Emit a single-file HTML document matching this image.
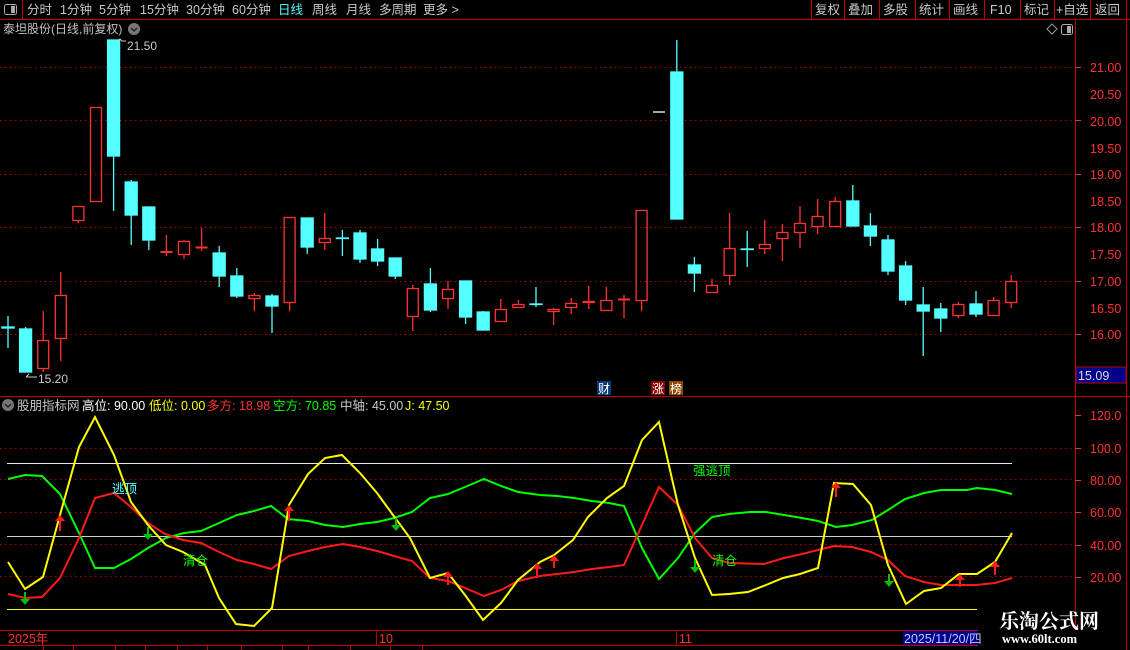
<!DOCTYPE html>
<html><head><meta charset="utf-8"><style>
body{margin:0;background:#000;width:1130px;height:650px;overflow:hidden;font-family:"Liberation Sans","Noto Sans CJK SC",sans-serif}
svg{position:absolute;left:0;top:0}
</style></head><body>
<svg width="1130" height="650" viewBox="0 0 1130 650" font-family="Liberation Sans, Noto Sans CJK SC, sans-serif">
<g fill="#c8c8c8" font-size="12.5">
<text x="27" y="14">分时</text><text x="60" y="14">1分钟</text><text x="99" y="14">5分钟</text><text x="140" y="14">15分钟</text><text x="186" y="14">30分钟</text><text x="232" y="14">60分钟</text><text x="278" y="14" fill="#54ffff">日线</text><text x="312" y="14">周线</text><text x="346" y="14">月线</text><text x="379" y="14">多周期</text><text x="423" y="14">更多 &gt;</text>
<text x="815" y="14">复权</text><text x="848" y="14">叠加</text><text x="883" y="14">多股</text><text x="919" y="14">统计</text><text x="953" y="14">画线</text><text x="990" y="14">F10</text><text x="1024" y="14">标记</text><text x="1056" y="14">+自选</text><text x="1095" y="14">返回</text>
</g>
<g stroke="#c00000" stroke-width="1" fill="none">
<line x1="0" y1="19.5" x2="1130" y2="19.5"/>
<line x1="22.5" y1="0" x2="22.5" y2="19"/>
<line x1="811.5" y1="0" x2="811.5" y2="19"/><line x1="844.5" y1="0" x2="844.5" y2="19"/><line x1="879.5" y1="0" x2="879.5" y2="19"/><line x1="915.5" y1="0" x2="915.5" y2="19"/><line x1="949.5" y1="0" x2="949.5" y2="19"/><line x1="984.5" y1="0" x2="984.5" y2="19"/><line x1="1020.5" y1="0" x2="1020.5" y2="19"/><line x1="1054.5" y1="0" x2="1054.5" y2="19"/><line x1="1090.5" y1="0" x2="1090.5" y2="19"/><line x1="1126.5" y1="0" x2="1126.5" y2="650"/>
<line x1="1075.5" y1="19" x2="1075.5" y2="630"/>
<line x1="0" y1="396.5" x2="1130" y2="396.5"/>
<line x1="0" y1="630.5" x2="978" y2="630.5"/>
<line x1="0" y1="645.5" x2="978" y2="645.5"/>
<line x1="376.5" y1="630" x2="376.5" y2="645"/><line x1="676.5" y1="630" x2="676.5" y2="645"/>
<line x1="43.5" y1="646" x2="43.5" y2="650"/><line x1="73.5" y1="646" x2="73.5" y2="650"/><line x1="115.5" y1="646" x2="115.5" y2="650"/><line x1="145.5" y1="646" x2="145.5" y2="650"/><line x1="177.5" y1="646" x2="177.5" y2="650"/><line x1="207.5" y1="646" x2="207.5" y2="650"/><line x1="241.5" y1="646" x2="241.5" y2="650"/><line x1="282.5" y1="646" x2="282.5" y2="650"/><line x1="308.5" y1="646" x2="308.5" y2="650"/><line x1="350.5" y1="646" x2="350.5" y2="650"/><line x1="390.5" y1="646" x2="390.5" y2="650"/><line x1="422.5" y1="646" x2="422.5" y2="650"/>
</g>
<rect x="4.5" y="4.5" width="12" height="10" rx="2" fill="none" stroke="#aaa"/><rect x="11" y="6" width="4" height="7" fill="#aaa"/>
<text x="3" y="33" fill="#c0c0c0" font-size="12">泰坦股份(日线,前复权)</text>
<circle cx="134" cy="29" r="6" fill="#777"/><path d="M131 28l3 3 3-3" stroke="#222" fill="none" stroke-width="1.5"/>
<path d="M1047 29l5-5 5 5-5 5z" fill="none" stroke="#999"/>
<rect x="1061.5" y="24.5" width="11" height="10" rx="2" fill="none" stroke="#aaa"/><rect x="1067" y="26" width="4" height="7" fill="#aaa"/>
<g stroke="#b00000" stroke-dasharray="1.5 3.5">
<line x1="0" y1="67.5" x2="1075" y2="67.5"/><line x1="0" y1="120.5" x2="1075" y2="120.5"/><line x1="0" y1="174.5" x2="1075" y2="174.5"/><line x1="0" y1="227.5" x2="1075" y2="227.5"/><line x1="0" y1="281.5" x2="1075" y2="281.5"/><line x1="0" y1="334.5" x2="1075" y2="334.5"/>
<line x1="0" y1="448.5" x2="1075" y2="448.5"/><line x1="0" y1="479.5" x2="1075" y2="479.5"/><line x1="0" y1="512.5" x2="1075" y2="512.5"/><line x1="0" y1="544.5" x2="1075" y2="544.5"/><line x1="0" y1="576.5" x2="1075" y2="576.5"/>
</g>
<g fill="#ff3232" font-size="12.5">
<text x="1090" y="72">21.00</text><text x="1090" y="99">20.50</text><text x="1090" y="126">20.00</text><text x="1090" y="153">19.50</text><text x="1090" y="179">19.00</text><text x="1090" y="206">18.50</text><text x="1090" y="232">18.00</text><text x="1090" y="259">17.50</text><text x="1090" y="286">17.00</text><text x="1090" y="313">16.50</text><text x="1090" y="339">16.00</text>
<text x="1090" y="420">120.0</text><text x="1090" y="453">100.0</text><text x="1090" y="485">80.00</text><text x="1090" y="517">60.00</text><text x="1090" y="550">40.00</text><text x="1090" y="582">20.00</text>
</g>
<g stroke="#ff3232"><line x1="1075" y1="67.5" x2="1081" y2="67.5"/><line x1="1075" y1="120.5" x2="1081" y2="120.5"/><line x1="1075" y1="174.5" x2="1081" y2="174.5"/><line x1="1075" y1="227.5" x2="1081" y2="227.5"/><line x1="1075" y1="281.5" x2="1081" y2="281.5"/><line x1="1075" y1="334.5" x2="1081" y2="334.5"/>
<line x1="1075" y1="415.5" x2="1081" y2="415.5"/><line x1="1075" y1="448.5" x2="1081" y2="448.5"/><line x1="1075" y1="480.5" x2="1081" y2="480.5"/><line x1="1075" y1="512.5" x2="1081" y2="512.5"/><line x1="1075" y1="545.5" x2="1081" y2="545.5"/><line x1="1075" y1="577.5" x2="1081" y2="577.5"/></g>
<rect x="1076" y="367" width="50" height="16" fill="#00008b" stroke="#c00000"/>
<text x="1078" y="380" fill="#ddd" font-size="12.5">15.09</text>
<g stroke-width="1.3">
<g stroke="#54ffff" fill="#54ffff">
<line x1="8" y1="316" x2="8" y2="348"/><rect x="2" y="327" width="12" height="1"/>
<line x1="25.6" y1="327" x2="25.6" y2="372"/><rect x="19.6" y="329" width="12" height="43"/>
<line x1="113.6" y1="40" x2="113.6" y2="211"/><rect x="107.6" y="40" width="12" height="116"/>
<line x1="131.2" y1="180" x2="131.2" y2="245"/><rect x="125.2" y="182" width="12" height="33"/>
<line x1="148.8" y1="207" x2="148.8" y2="250"/><rect x="142.8" y="207" width="12" height="33"/>
<line x1="219.2" y1="246" x2="219.2" y2="287"/><rect x="213.2" y="253" width="12" height="23"/>
<line x1="236.8" y1="268" x2="236.8" y2="298"/><rect x="230.8" y="276" width="12" height="20"/>
<line x1="272" y1="294" x2="272" y2="333"/><rect x="266" y="296" width="12" height="10"/>
<line x1="307.2" y1="218" x2="307.2" y2="254"/><rect x="301.2" y="218" width="12" height="29"/>
<line x1="342.4" y1="230" x2="342.4" y2="256"/><rect x="336.4" y="238" width="12" height="0.5"/>
<line x1="360" y1="230" x2="360" y2="263"/><rect x="354" y="233" width="12" height="26"/>
<line x1="377.6" y1="239" x2="377.6" y2="266"/><rect x="371.6" y="249" width="12" height="12"/>
<line x1="395.2" y1="258" x2="395.2" y2="279"/><rect x="389.2" y="258" width="12" height="18"/>
<line x1="430.4" y1="268" x2="430.4" y2="312"/><rect x="424.4" y="284" width="12" height="26"/>
<line x1="465.6" y1="281" x2="465.6" y2="324"/><rect x="459.6" y="281" width="12" height="36"/>
<line x1="483.2" y1="311" x2="483.2" y2="330"/><rect x="477.2" y="312" width="12" height="18"/>
<line x1="536" y1="287" x2="536" y2="307"/><rect x="530" y="304" width="12" height="0.5"/>
<line x1="676.8" y1="40" x2="676.8" y2="219"/><rect x="670.8" y="72" width="12" height="147"/>
<line x1="694.4" y1="257" x2="694.4" y2="292"/><rect x="688.4" y="265" width="12" height="8"/>
<line x1="747.2" y1="231" x2="747.2" y2="267"/><rect x="741.2" y="249" width="12" height="0.5"/>
<line x1="852.8" y1="185" x2="852.8" y2="226"/><rect x="846.8" y="201" width="12" height="25"/>
<line x1="870.4" y1="213" x2="870.4" y2="246"/><rect x="864.4" y="226" width="12" height="10"/>
<line x1="888" y1="235" x2="888" y2="275"/><rect x="882" y="240" width="12" height="31"/>
<line x1="905.6" y1="261" x2="905.6" y2="305"/><rect x="899.6" y="266" width="12" height="34"/>
<line x1="923.2" y1="287" x2="923.2" y2="356"/><rect x="917.2" y="305" width="12" height="6"/>
<line x1="940.8" y1="303" x2="940.8" y2="332"/><rect x="934.8" y="309" width="12" height="9"/>
<line x1="976" y1="291" x2="976" y2="317"/><rect x="970" y="304" width="12" height="10"/>
</g>
<g stroke="#ff3232" fill="none">
<path d="M43.2 311V340M43.2 369V372M60.8 272V295M60.8 339V361M78.4 221V223M166.4 235V256M184 240V241M184 255V259M201.6 228V251M254.4 293V295M254.4 299V311M289.6 303V311M324.8 213V238M324.8 243V250M412.8 285V288M412.8 317V331M448 281V289M448 299V309M500.8 299V309M518.4 300V304M553.6 308V309M553.6 312V325M571.2 298V303M571.2 308V314M588.8 286V301M588.8 303V309M606.4 287V300M624 295V318M641.6 301V311M712 279V285M729.6 213V248M729.6 276V285M764.8 220V244M764.8 249V254M782.4 224V232M782.4 239V261M800 206V223M800 233V248M817.6 199V216M817.6 227V234M835.2 197V201M958.4 302V304M958.4 316V318M993.6 297V300M1011.2 275V281M1011.2 303V308"/>
<rect x="37.7" y="340.5" width="11" height="28"/><rect x="55.3" y="295.5" width="11" height="43"/><rect x="72.9" y="206.5" width="11" height="14"/><rect x="90.5" y="107.5" width="11" height="94"/>
<rect x="178.5" y="241.5" width="11" height="13"/><rect x="248.9" y="295.5" width="11" height="3"/><rect x="284.1" y="217.5" width="11" height="85"/><rect x="319.3" y="238.5" width="11" height="4"/><rect x="407.3" y="288.5" width="11" height="28"/><rect x="442.5" y="289.5" width="11" height="9"/><rect x="495.3" y="309.5" width="11" height="12"/><rect x="512.9" y="304.5" width="11" height="3"/><rect x="548.1" y="309.5" width="11" height="2"/><rect x="565.7" y="303.5" width="11" height="4"/><rect x="583.3" y="301.5" width="11" height="1"/><rect x="600.9" y="300.5" width="11" height="10"/><rect x="636.1" y="210.5" width="11" height="90"/>
<rect x="706.5" y="285.5" width="11" height="7"/><rect x="724.1" y="248.5" width="11" height="27"/><rect x="759.3" y="244.5" width="11" height="4"/><rect x="776.9" y="232.5" width="11" height="6"/><rect x="794.5" y="223.5" width="11" height="9"/><rect x="812.1" y="216.5" width="11" height="10"/><rect x="829.7" y="201.5" width="11" height="25"/><rect x="952.9" y="304.5" width="11" height="11"/><rect x="988.1" y="300.5" width="11" height="15"/><rect x="1005.7" y="281.5" width="11" height="21"/>
</g>
<g fill="#ff3232"><rect x="160.4" y="251" width="12" height="2"/><rect x="195.6" y="246.5" width="12" height="2"/><rect x="618" y="298.5" width="12" height="2"/></g>
<line x1="653" y1="112" x2="665" y2="112" stroke="#fff"/>
</g>
<text x="127" y="50" fill="#c8c8c8" font-size="12">21.50</text><path d="M117 41l3-2 2 2h4" stroke="#c8c8c8" fill="none"/>
<text x="38" y="383" fill="#c8c8c8" font-size="12">15.20</text><path d="M26 377h11M26 377l3-3" stroke="#c8c8c8" fill="none"/>
<rect x="597" y="381" width="14" height="14" fill="#0a3a7a"/><text x="598" y="393" fill="#fff" font-size="12">财</text>
<rect x="651" y="381" width="14" height="14" fill="#8b0000"/><text x="652" y="393" fill="#fff" font-size="12">涨</text>
<rect x="669" y="381" width="14" height="14" fill="#8b4a00"/><text x="670" y="393" fill="#fff" font-size="12">榜</text>
<circle cx="8" cy="405" r="6" fill="#777"/><path d="M5 404l3 3 3-3" stroke="#222" fill="none" stroke-width="1.5"/>
<g font-size="12.5"><text x="17" y="410" fill="#c8c8c8">股朋指标网</text><text x="82" y="410" fill="#fff">高位: 90.00</text><text x="149" y="410" fill="#ffff00">低位: 0.00</text><text x="207" y="410" fill="#ff3232">多方: 18.98</text><text x="273" y="410" fill="#00ff00">空方: 70.85</text><text x="340" y="410" fill="#c8c8c8">中轴: 45.00</text><text x="405" y="410" fill="#ffff00">J: 47.50</text></g>
<line x1="7" y1="463.5" x2="1012" y2="463.5" stroke="#e8e8e8"/>
<line x1="7" y1="536.5" x2="1012" y2="536.5" stroke="#d0d0d0"/>
<line x1="7" y1="609.5" x2="977" y2="609.5" stroke="#ffff00"/>
<g fill="none" stroke-width="2">
<polyline stroke="#00ff00" points="8,479 25,475 42,476 60,494 79,533 95,568 114,568 131,559 148,548 166,538 184,533 201,531 219,523 237,515 254,511 271,506 288,519 308,521 325,525 343,527 360,524 377,522 394,518 412,512 430,498 448,494 465,487 484,479 501,486 518,492 540,495 557,496 574,498 592,501 609,503 624,506 642,548 659,579 678,558 695,533 712,517 729,514 750,512 766,512 784,515 802,518 818,521 836,527 852,525 872,520 888,510 905,499 924,493 941,490 967,490 977,488 995,490 1012,494"/>
<polyline stroke="#ff1a1a" points="8,594 25,598 42,597 60,578 79,538 95,498 114,493 131,507 148,523 165,534 183,540 201,543 219,552 237,560 254,564 271,569 289,556 308,551 325,547 343,544 360,547 377,551 394,556 412,561 430,578 448,581 465,588 484,596 501,590 518,581 540,576 557,574 574,572 592,569 609,567 624,565 659,487 678,505 695,538 712,558 729,563 764,564 784,558 802,554 818,550 834,546 852,547 871,552 888,560 905,576 924,582 941,585 976,585 995,583 1012,578"/>
<polyline stroke="#ffff00" points="8,562 25,589 43,577 60,515 79,447 95,417 114,455 131,502 148,525 166,545 183,552 205,565 219,598 236,624 254,626 272,608 289,505 308,474 325,458 342,455 360,473 377,493 393,515 410,538 430,578 448,573 465,595 483,620 501,603 518,580 540,562 554,555 573,540 588,517 607,498 624,486 642,440 659,422 678,505 695,558 712,595 729,594 748,592 766,585 783,578 800,574 818,568 834,483 853,484 871,505 888,565 906,604 924,591 941,588 959,574 977,574 995,562 1012,533"/>
</g>
<g fill="#ff1a1a" stroke="#ff1a1a" stroke-width="2">
<path d="M60 531V520" /><path d="M55 521l5-6 5 6z" stroke="none"/>
<path d="M289 521V510"/><path d="M284 511l5-6 5 6z" stroke="none"/>
<path d="M448 585V576"/><path d="M443 577l5-6 5 6z" stroke="none"/>
<path d="M537 578V568"/><path d="M532 569l5-6 5 6z" stroke="none"/>
<path d="M554 568V560"/><path d="M549 561l5-6 5 6z" stroke="none"/>
<path d="M836 497V487"/><path d="M831 488l5-6 5 6z" stroke="none"/>
<path d="M960 587V579"/><path d="M955 580l5-6 5 6z" stroke="none"/>
<path d="M995 575V566"/><path d="M990 567l5-6 5 6z" stroke="none"/>
</g>
<g fill="#00c000" stroke="#00c000" stroke-width="2">
<path d="M25 592V601"/><path d="M20 599l5 6 5-6z" stroke="none"/>
<path d="M148 527V536"/><path d="M143 534l5 6 5-6z" stroke="none"/>
<path d="M396 518V527"/><path d="M391 525l5 6 5-6z" stroke="none"/>
<path d="M695 560V569"/><path d="M690 567l5 6 5-6z" stroke="none"/>
<path d="M889 574V583"/><path d="M884 581l5 6 5-6z" stroke="none"/>
</g>
<g font-size="12.5"><text x="112" y="493" fill="#54ffff">逃顶</text><text x="183" y="565" fill="#00ff00">清仓</text><text x="693" y="475" fill="#00ff00">强逃顶</text><text x="712" y="565" fill="#00ff00">清仓</text></g>
<g font-size="12.5" fill="#ff3232"><text x="8" y="643">2025年</text><text x="379" y="643">10</text><text x="679" y="643">11</text></g>
<rect x="903" y="631" width="75" height="14" fill="#00008b"/><text x="904" y="643" fill="#c8c8ff" font-size="12.5">2025/11/20/四</text>
<text x="999" y="628" fill="#fff" font-size="20" font-weight="bold" font-family="Noto Serif CJK SC, serif">乐淘公式网</text>
<text x="1002" y="643" fill="#fff" font-size="12.5" font-weight="bold" font-family="Liberation Serif, serif">www.60lt.com</text>
</svg>
</body></html>
